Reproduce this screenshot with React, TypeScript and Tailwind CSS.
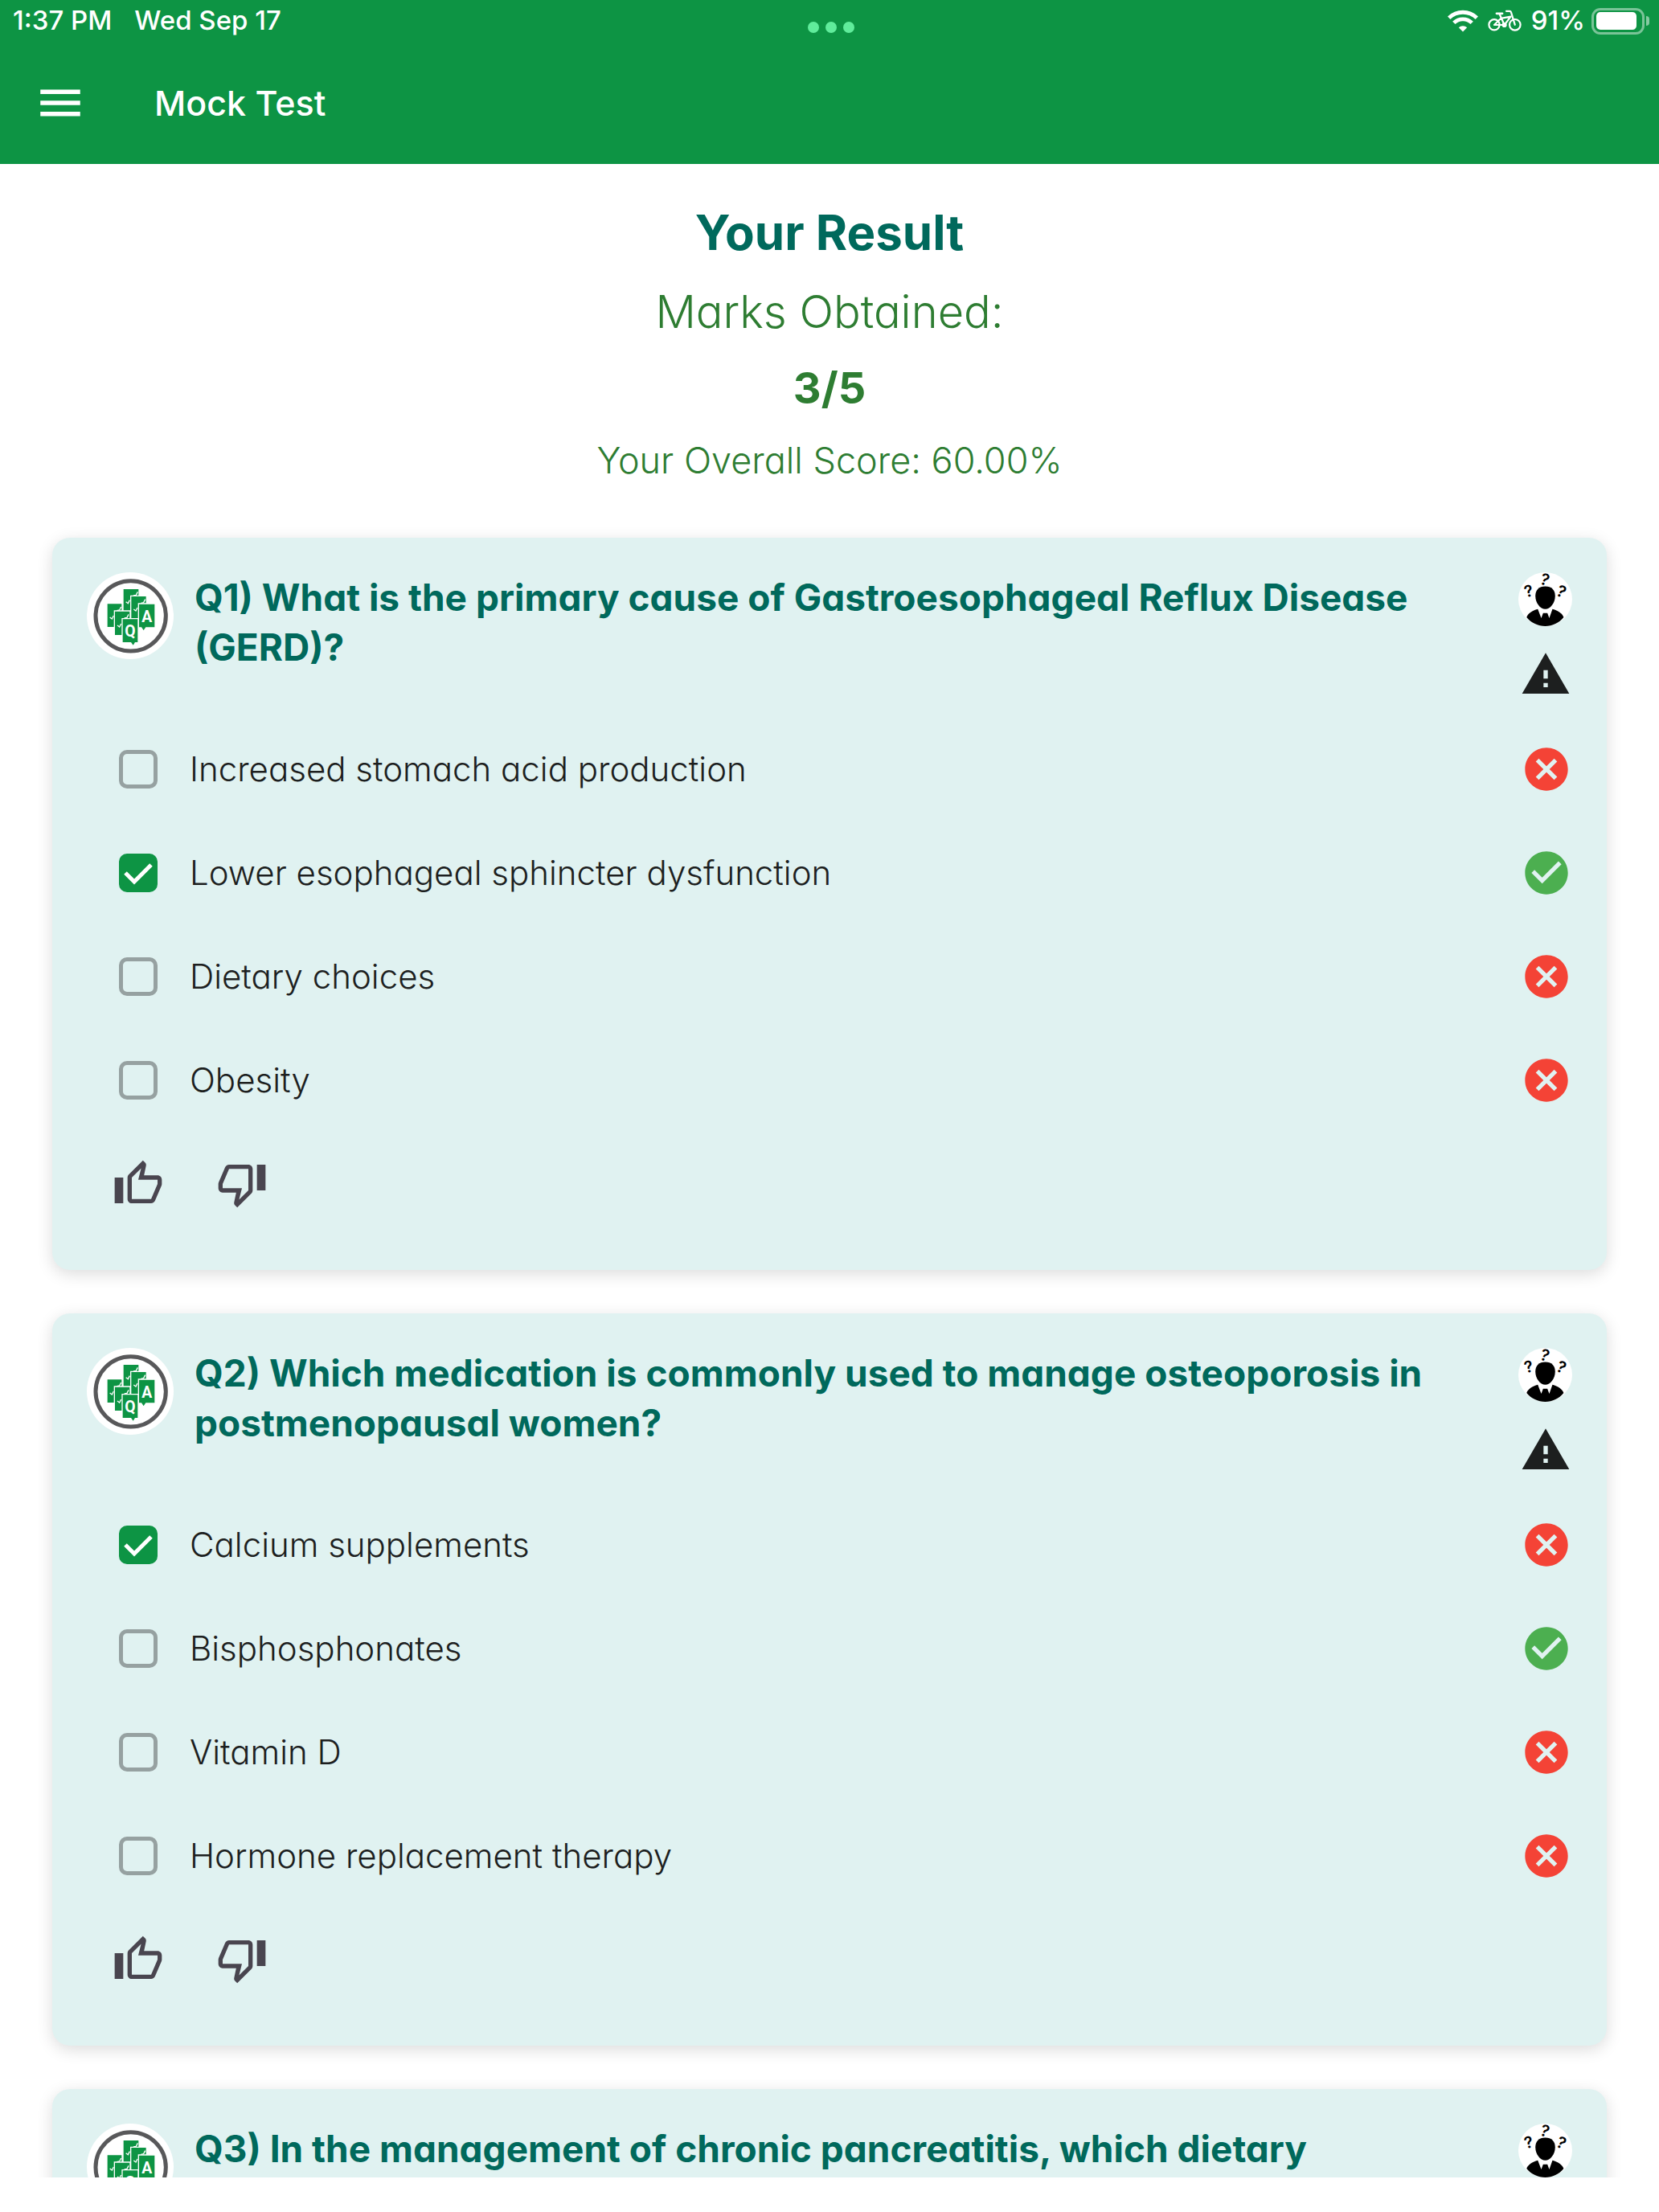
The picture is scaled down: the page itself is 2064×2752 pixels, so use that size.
import { useState } from 'react'
import { MdCancel, MdCheckCircle, MdMenu, MdWarning } from 'react-icons/md'

type Option = {
  label: string
  correct: boolean
  chosen?: boolean
}

type Question = {
  id: number
  text: string
  options: Option[]
}

const questions: Question[] = [
  {
    id: 1,
    text: 'What is the primary cause of Gastroesophageal Reflux Disease (GERD)?',
    options: [
      { label: 'Increased stomach acid production', correct: false },
      { label: 'Lower esophageal sphincter dysfunction', correct: true, chosen: true },
      { label: 'Dietary choices', correct: false },
      { label: 'Obesity', correct: false },
    ],
  },
  {
    id: 2,
    text: 'Which medication is commonly used to manage osteoporosis in postmenopausal women?',
    options: [
      { label: 'Calcium supplements', correct: false, chosen: true },
      { label: 'Bisphosphonates', correct: true },
      { label: 'Vitamin D', correct: false },
      { label: 'Hormone replacement therapy', correct: false },
    ],
  },
  {
    id: 3,
    text: 'In the management of chronic pancreatitis, which dietary',
    options: [],
  },
]

function WifiIcon() {
  return (
    <svg viewBox="0 0 38 28" className="h-7 w-[38px]" fill="none" stroke="currentColor" strokeWidth="4.8" aria-hidden="true">
      <path d="M1.7 10.3a24.7 24.7 0 0 1 34.6 0" />
      <path d="M7.8 16.4a16 16 0 0 1 22.4 0" />
      <path d="M19 27.6l-5.2-5.4a7.6 7.6 0 0 1 10.4 0z" fill="currentColor" stroke="none" />
    </svg>
  )
}

function BikeIcon() {
  return (
    <svg
      viewBox="0 0 42 28"
      className="h-7 w-[42px]"
      fill="none"
      stroke="currentColor"
      strokeWidth="2.2"
      strokeLinecap="round"
      strokeLinejoin="round"
      aria-hidden="true"
    >
      <circle cx="8" cy="18.8" r="6.6" />
      <circle cx="33.8" cy="18.8" r="6.8" />
      <path d="M11 4.8h7" strokeWidth="2.8" />
      <path d="M23 1.8h4.2c1 0 1.5.6 1.8 1.6l4.8 15.4" />
      <path d="M14.6 5.5l6 13.5H8l8.4-8.2 12.2-2.2-8 10.4" />
      <circle cx="20.6" cy="19" r="2" fill="currentColor" />
    </svg>
  )
}

function Battery() {
  return (
    <span className="flex items-center gap-0.5">
      <span className="flex h-[33px] w-[66px] items-center rounded-[11px] border-[3px] border-white/45 p-[3px]">
        <span className="h-[22px] w-[50px] rounded-[5px] bg-white" />
      </span>
      <span className="h-3 w-1 rounded-r-full bg-white/50" />
    </span>
  )
}

function ThumbUpIcon() {
  return (
    <svg viewBox="0 0 24 24" className="size-16" fill="currentColor" aria-hidden="true">
      <path d="M9 21h9c.83 0 1.54-.5 1.84-1.22l3.02-7.05c.09-.23.14-.47.14-.73v-2c0-1.1-.9-2-2-2h-6.31l.95-4.57.03-.32c0-.41-.17-.79-.44-1.06L14.17 1 7.58 7.59C7.22 7.95 7 8.45 7 9v10c0 1.1.9 2 2 2zM9 9l4.34-4.34L12 10h9v2l-3 7H9V9zM1 9h4v12H1z" />
    </svg>
  )
}

function ThumbDownIcon() {
  return (
    <svg viewBox="0 0 24 24" className="size-16" fill="currentColor" aria-hidden="true">
      <path d="M15 3H6c-.83 0-1.54.5-1.84 1.22l-3.02 7.05c-.09.23-.14.47-.14.73v2c0 1.1.9 2 2 2h6.31l-.95 4.57-.03.32c0 .41.17.79.44 1.06L9.83 23l6.59-6.59c.36-.36.58-.86.58-1.41V5c0-1.1-.9-2-2-2zm0 12l-4.34 4.34L12 14H3v-2l3-7h9v10zm4-12h4v12h-4z" />
    </svg>
  )
}

function QaLogo() {
  return (
    <svg viewBox="0 0 324 324" className="size-[108px] shrink-0" role="img" aria-label="Q and A">
      <circle cx="162" cy="162" r="162" fill="#fff" />
      <circle cx="164" cy="163" r="131" fill="none" stroke="#58585a" strokeWidth="15" />
      <g fill="#0d9444" stroke="#fff" strokeWidth="4">
        <path d="M135 61h60v86h-60z" />
        <path d="M146 110l8 6 6-12M174 87l10-2 6-12" fill="none" />
        <path d="M164 88h59v86h-59z" />
        <path d="M175 138l8 6 6-12M202 115l10-2 6-12" fill="none" />
        <path d="M75 116h57v90H75z" />
        <path d="M86 168l8 6 6-12M112 143l10-2 6-12" fill="none" />
        <path d="M103 144h59v92h-59z" />
        <path d="M114 198l8 6 6-12M140 171l10-2 6-12" fill="none" />
        <path d="M193 117h62v90h-34l-9 13-9-13h-10z" />
        <path d="M132 173h60v90h-11l-8 13-9-13h-32z" />
      </g>
      <g fill="#fff" fontWeight="700" fontSize="58" textAnchor="middle" fontFamily="Roboto, sans-serif">
        <text x="224" y="187">A</text>
        <text x="162" y="240">Q</text>
      </g>
    </svg>
  )
}

function PuzzledPerson() {
  return (
    <svg viewBox="0 0 202 202" className="size-[67px] overflow-visible" aria-hidden="true">
      <circle cx="101" cy="101" r="101" fill="#fff" />
      <path d="M101 53c24 0 37 14 37 36 0 26-18 49-37 49S64 115 64 89c0-22 13-36 37-36z" />
      <path d="M31 169c4-14 22-26 42-31l13 34 7-19h16l7 19 12-34c20 5 38 17 42 31-17 21-42 33-69 33s-53-12-70-33z" />
      <g fontFamily="Inter, sans-serif" fontWeight="600" fontSize="60" textAnchor="middle">
        <text transform="translate(44 91) rotate(-14)">?</text>
        <text transform="translate(93 47) rotate(18)">?</text>
        <text transform="translate(153 91) rotate(24)">?</text>
      </g>
    </svg>
  )
}

function OptionRow({ option, name }: { option: Option; name: string }) {
  const [checked, setChecked] = useState(Boolean(option.chosen))

  return (
    <li className="flex h-[129px] items-center justify-between pl-10">
      <label className="flex items-center gap-10 text-[42px] font-light text-[#1d1f1f]">
        <span className="grid size-12 place-items-center">
          <input
            type="checkbox"
            name={name}
            checked={checked}
            onChange={(e) => setChecked(e.target.checked)}
            className="col-start-1 row-start-1 size-12 appearance-none rounded-[10px] border-[5px] border-[#96a1a1] checked:border-[#0d9444] checked:bg-[#0d9444]"
          />
          {checked && (
            <svg
              viewBox="0 0 48 48"
              className="pointer-events-none col-start-1 row-start-1 size-12"
              fill="none"
              stroke="#fff"
              strokeWidth="5"
              aria-hidden="true"
            >
              <path d="M8 24l11 11 21-21" />
            </svg>
          )}
        </span>
        {option.label}
      </label>
      {option.correct ? (
        <MdCheckCircle className="size-16 text-[#4caf50]" aria-label="Correct" />
      ) : (
        <MdCancel className="size-16 text-[#f44336]" aria-label="Incorrect" />
      )}
    </li>
  )
}

function QuestionCard({ question }: { question: Question }) {
  return (
    <article className="rounded-[22px] bg-[#e0f2f1] p-[43px] shadow-[0_5px_20px_rgba(0,0,0,0.14)]">
      <div className="flex min-h-[180px] items-start">
        <QaLogo />
        <h2 className="ml-[26px] flex-1 pr-16 text-[46px] leading-[62px] font-bold text-[#00695c]">
          {`Q${question.id}) ${question.text}`}
        </h2>
        <div className="flex flex-col items-center gap-7">
          <button type="button" aria-label="Ask for an explanation">
            <PuzzledPerson />
          </button>
          <button type="button" aria-label="Report this question">
            <MdWarning className="size-16 text-[#1d1f1f]" />
          </button>
        </div>
      </div>

      <ul>
        {question.options.map((option) => (
          <OptionRow key={option.label} option={option} name={`question-${question.id}`} />
        ))}
      </ul>

      <div className="flex h-[129px] items-center gap-[65px] pl-8 text-[#49454f]">
        <button type="button" aria-label="Like">
          <ThumbUpIcon />
        </button>
        <button type="button" aria-label="Dislike">
          <ThumbDownIcon />
        </button>
      </div>
    </article>
  )
}

export default function App() {
  return (
    <div className="flex h-screen flex-col bg-white font-['Inter',sans-serif] [font-feature-settings:'cv11']">
      <header className="shrink-0 bg-[#0d9444] text-white">
        <div className="grid h-[52px] grid-cols-3 items-center pr-3 pl-4 text-[33px] font-medium">
          <div className="flex gap-7">
            <span>1:37 PM</span>
            <span>Wed Sep 17</span>
          </div>
          <div className="flex justify-center gap-2 pt-4">
            <span className="size-3.5 rounded-full bg-[#60ec9b]" />
            <span className="size-3.5 rounded-full bg-[#60ec9b]" />
            <span className="size-3.5 rounded-full bg-[#60ec9b]" />
          </div>
          <div className="flex items-center justify-end gap-3">
            <WifiIcon />
            <BikeIcon />
            <span className="flex items-center gap-2">
              91%
              <Battery />
            </span>
          </div>
        </div>
        <div className="flex h-[152px] items-center gap-[84px] pl-[42px]">
          <button type="button" aria-label="Open menu">
            <MdMenu className="size-[66px]" />
          </button>
          <h1 className="text-[43px] font-medium">Mock Test</h1>
        </div>
      </header>

      <main className="min-h-0 flex-1 overflow-hidden">
        <section className="pt-9 pb-[51px] text-center text-[#2e7d32]">
          <h2 className="text-[60px] leading-[98px] font-bold text-[#00695c]">Your Result</h2>
          <p className="text-[56px] leading-[100px] font-light">Marks Obtained:</p>
          <p className="text-[54px] leading-[90px] font-bold">3/5</p>
          <p className="text-[45px] leading-[90px] font-light">Your Overall Score: 60.00%</p>
        </section>

        <div className="flex flex-col gap-[54px] px-[65px]">
          {questions.map((question) => (
            <QuestionCard key={question.id} question={question} />
          ))}
        </div>
      </main>

      <footer className="h-[43px] shrink-0" />
    </div>
  )
}
